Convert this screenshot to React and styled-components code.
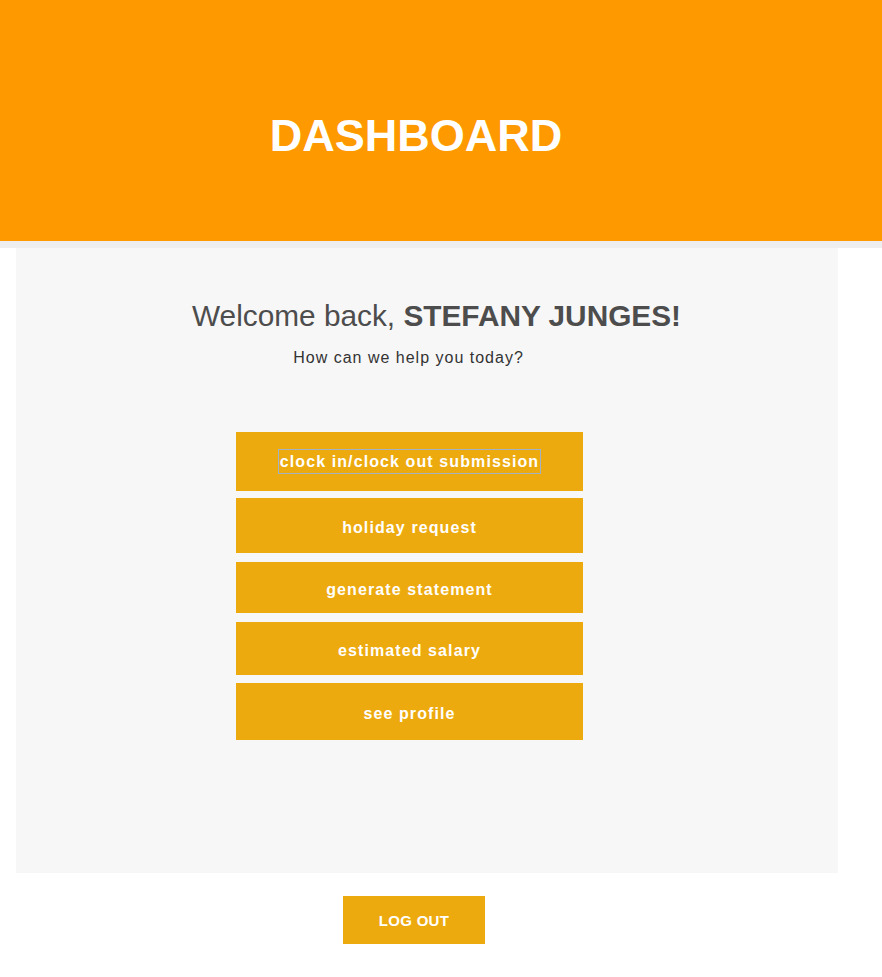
import React from 'react';
import styled, { createGlobalStyle } from 'styled-components';

const GlobalStyle = createGlobalStyle`
  body {
    margin: 0;
    background: #ffffff;
    font-family: "Liberation Sans", Arial, sans-serif;
  }
`;

const Header = styled.header`
  height: 241px;
  background: #ff9900;
  display: flex;
  align-items: center;
  justify-content: center;
  padding: 30px 50px 0 0;
  box-sizing: border-box;

  & h1 {
    margin: 0;
    color: #ffffff;
    font-size: 45px;
    font-weight: bold;
    line-height: 52px;
  }
`;

const Strip = styled.div`
  height: 7px;
  background: #eeeeee;
`;

const Panel = styled.main`
  margin: 0 44px 0 16px;
  height: 625px;
  background: #f7f7f7;
  padding-top: 50px;
  box-sizing: border-box;
  display: flex;
  flex-direction: column;
`;

const Welcome = styled.h2`
  margin: 0;
  padding-left: 19px;
  text-align: center;
  font-size: 29.8px;
  line-height: 36px;
  font-weight: normal;
  color: #4d4d4d;

  & strong {
    font-weight: bold;
  }
`;

const Subtitle = styled.p`
  margin: 14px 0 0;
  padding-right: 37px;
  text-align: center;
  font-size: 16px;
  line-height: 20px;
  letter-spacing: 1px;
  color: #333333;
`;

const Menu = styled.nav`
  margin: 64px 0 0 220px;
  width: 347px;
  display: flex;
  flex-direction: column;
`;

const MenuButton = styled.button`
  height: ${(p) => p.$h}px;
  margin-top: ${(p) => p.$gap}px;
  border: 0;
  padding: ${(p) => (p.$focused ? 0 : 4)}px 0 0;
  box-sizing: border-box;
  display: flex;
  align-items: center;
  justify-content: center;
  background: #edaa0e;
  color: #ffffff;
  font-family: "Liberation Sans", Arial, sans-serif;
  font-size: 16px;
  font-weight: bold;
  letter-spacing: 1.1px;
  cursor: pointer;
`;

const Label = styled.span`
  display: block;
  line-height: 23px;
  padding: 0 1px;
  outline: ${(p) => (p.$focused ? '1px solid #a3b2c4' : 'none')};
`;

const Footer = styled.footer`
  display: flex;
  padding: 23px 0 33px 343px;
`;

const LogoutButton = styled.button`
  width: 142px;
  height: 48px;
  border: 0;
  background: #edaa0e;
  color: #ffffff;
  font-family: "Liberation Sans", Arial, sans-serif;
  font-size: 15px;
  font-weight: bold;
  letter-spacing: 0.3px;
  cursor: pointer;
`;

const items = [
  { label: 'clock in/clock out submission', h: 59, gap: 0 },
  { label: 'holiday request', h: 55, gap: 7 },
  { label: 'generate statement', h: 51, gap: 9 },
  { label: 'estimated salary', h: 53, gap: 9 },
  { label: 'see profile', h: 57, gap: 8 },
];

const App = () => (
  <>
    <GlobalStyle />
    <Header>
      <h1>DASHBOARD</h1>
    </Header>
    <Strip />
    <Panel>
      <Welcome>
        Welcome back, <strong>STEFANY JUNGES!</strong>
      </Welcome>
      <Subtitle>How can we help you today?</Subtitle>
      <Menu>
        {items.map((item, i) => (
          <MenuButton
            key={item.label}
            $h={item.h}
            $gap={item.gap}
            $focused={i === 0}
          >
            <Label $focused={i === 0}>{item.label}</Label>
          </MenuButton>
        ))}
      </Menu>
    </Panel>
    <Footer>
      <LogoutButton>LOG OUT</LogoutButton>
    </Footer>
  </>
);

export default App;
